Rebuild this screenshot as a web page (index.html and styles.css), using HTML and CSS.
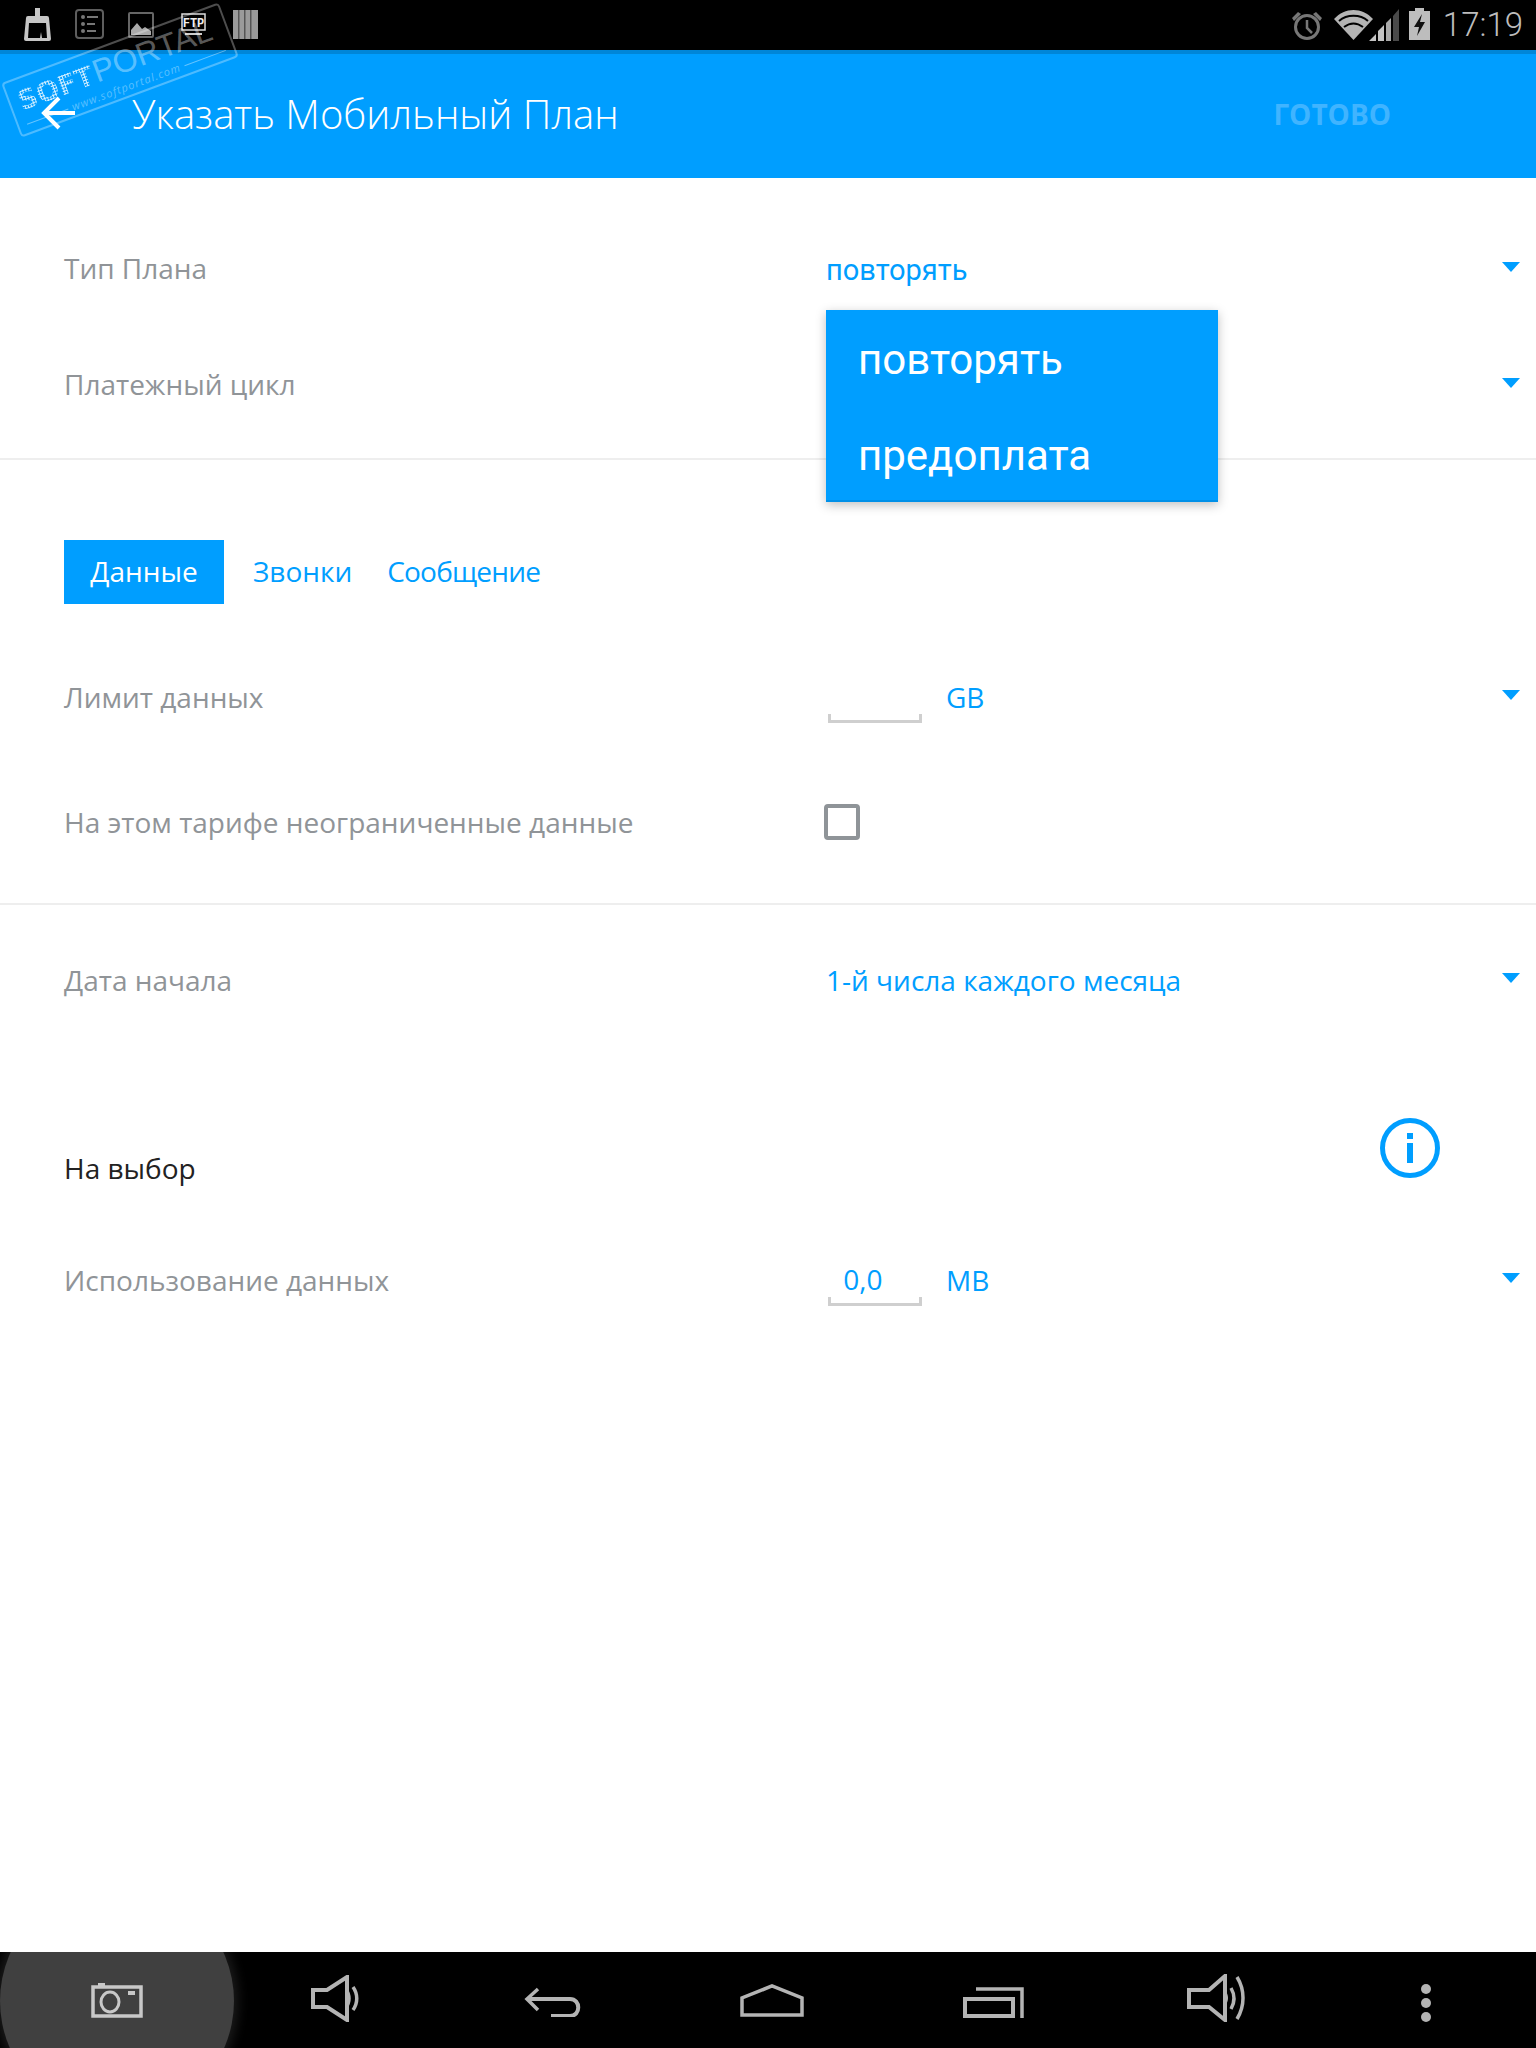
FILE: index.html
```html
<!DOCTYPE html>
<html lang="ru">
<head>
  <meta charset="UTF-8">
  <title>Указать Мобильный План</title>
  <link rel="stylesheet" href="styles.css">
</head>
<body>
  <div class="screen">
    <div class="status-bar">
      <div class="status-left">
        <svg class="ic-brush" viewBox="0 0 27 33"><path d="M11 0h5v8h7a2 2 0 0 1 2 2l2 21a2 2 0 0 1-2 2H2a2 2 0 0 1-2-2L2 10a2 2 0 0 1 2-2h7z" fill="#c6c6c6"/><path d="M5 15h17l1 15H18l-1-6-1 6H4z" fill="#000"/></svg>
        <svg class="ic-list" viewBox="0 0 29 30"><rect x="1" y="1" width="27" height="28" rx="3" fill="none" stroke="#5e5e5e" stroke-width="2"/><g fill="#777"><circle cx="8" cy="8" r="2"/><circle cx="8" cy="15" r="2"/><circle cx="8" cy="22" r="2"/><rect x="12" y="7" width="11" height="2"/><rect x="12" y="14" width="8" height="2"/><rect x="12" y="21" width="9" height="2"/></g></svg>
        <svg class="ic-pic" viewBox="0 0 26 26"><rect x="1" y="1" width="24" height="24" rx="1" fill="none" stroke="#666" stroke-width="2"/><path d="M3 23v-5l6-7 5 6 3-2 6 4v4z" fill="#aaa"/></svg>
        <svg class="ic-ftp" viewBox="0 0 25 23"><rect x="1" y="1" width="23" height="16" fill="none" stroke="#ddd" stroke-width="1.5"/><text x="12.5" y="14" text-anchor="middle" class="ftp-text">FTP</text><rect x="4" y="20" width="17" height="2" fill="#ccc"/></svg>
        <svg class="ic-bars" viewBox="0 0 25 29"><rect width="25" height="29" fill="#9a9a9a"/><g fill="#555"><rect x="5" width="1.5" height="29"/><rect x="11" width="1.5" height="29"/><rect x="17" width="1.5" height="29"/></g></svg>
      </div>
      <div class="status-right">
        <svg class="ic-alarm" viewBox="0 0 32 31"><circle cx="16" cy="17" r="11.5" fill="none" stroke="#777" stroke-width="3"/><path d="M16 10v8l5 5" fill="none" stroke="#777" stroke-width="2.5"/><path d="M1 8l6-6 3 2-7 7zM31 8l-6-6-3 2 7 7z" fill="#777"/></svg>
        <svg class="ic-wifi" viewBox="0 0 39 30"><path d="M19.500 30 0 9C11-3 28-3 39 9z" fill="#b4b4b4"/><path d="M5 11c8-7 21-7 29 0M10 17c6-4.500 13-4.500 19 0" fill="none" stroke="#000" stroke-width="2"/></svg>
        <svg class="ic-signal" viewBox="0 0 30 32"><path d="M0 32 7 25v7zM9 22l6-6v16H9z" fill="#c4c4c4"/><path d="M17 14l5-5v23h-5z" fill="#aaa"/><path d="M24 7l6-7v32h-6z" fill="#4a4a4a"/></svg>
        <svg class="ic-battery" viewBox="0 0 21 32"><path d="M6 0h9v3h6v29H0V3h6z" fill="#bdbdbd"/><path d="M13 6 5 19h5l-2 9 8-14h-5z" fill="#111"/></svg>
        <span class="clock">17:19</span>
      </div>
    </div>

    <header class="app-bar">
      <svg class="ic-back" viewBox="0 0 36 34"><path d="M34 17H4M18 2 3 17l15 15" fill="none" stroke="#fff" stroke-width="4"/></svg>
      <h1 class="app-title">Указать Мобильный План</h1>
      <span class="done">ГОТОВО</span>
    </header>

    <div class="watermark">
      <div class="wm-top"><span class="wm-soft">SOFT</span><span class="wm-portal">PORTAL</span></div>
      <div class="wm-url"><i></i><span>www.softportal.com</span><i></i></div>
    </div>

    <main class="form">
      <section class="plan">
        <div class="row">
          <span class="label">Тип Плана</span>
          <div class="value"><span>повторять</span><i class="arrow"></i></div>
        </div>
        <div class="row">
          <span class="label">Платежный цикл</span>
          <div class="value"><span></span><i class="arrow"></i></div>
        </div>
      </section>

      <section class="usage">
        <div class="tabs">
          <span class="tab active">Данные</span>
          <span class="tab">Звонки</span>
          <span class="tab tab-msg">Сообщение</span>
        </div>
        <div class="row row-limit">
          <span class="label">Лимит данных</span>
          <div class="value">
            <div class="unit-group">
              <div class="field"><span class="field-text"></span><div class="field-line"></div></div>
              <span class="unit">GB</span>
            </div>
            <i class="arrow"></i>
          </div>
        </div>
        <div class="row row-check">
          <span class="label">На этом тарифе неограниченные данные</span>
          <div class="value"><div class="checkbox"></div></div>
        </div>
      </section>

      <section class="extra">
        <div class="row row-date">
          <span class="label">Дата начала</span>
          <div class="value"><span>1-й числа каждого месяца</span><i class="arrow"></i></div>
        </div>
        <div class="optional">
          <span class="optional-title">На выбор</span>
          <svg class="ic-info" viewBox="0 0 60 60"><circle cx="30" cy="30" r="27.500" fill="none" stroke="#009eff" stroke-width="5"/><rect x="27" y="15" width="6" height="6" fill="#009eff"/><rect x="27" y="25" width="6" height="20" fill="#009eff"/></svg>
        </div>
        <div class="row row-used">
          <span class="label">Использование данных</span>
          <div class="value">
            <div class="unit-group">
              <div class="field"><span class="field-text">0,0</span><div class="field-line"></div></div>
              <span class="unit">MB</span>
            </div>
            <i class="arrow"></i>
          </div>
        </div>
      </section>
    </main>

    <div class="dropdown">
      <div class="dropdown-item">повторять</div>
      <div class="dropdown-item">предоплата</div>
    </div>

    <nav class="nav-bar">
      <div class="nav-glow"></div>
      <svg class="nav-cam" viewBox="0 0 52 36"><path d="M2 5h48v29H2z" fill="none" stroke="#c8c8c8" stroke-width="3.500"/><ellipse cx="19" cy="20" rx="9" ry="10" fill="none" stroke="#c8c8c8" stroke-width="3"/><rect x="37" y="9" width="7" height="4" fill="#c8c8c8"/><rect x="7" y="1" width="7" height="4" fill="#c8c8c8"/></svg>
      <svg class="nav-vol" viewBox="0 0 50 47"><path d="M2 15h14L36 2v43L16 32H2z" fill="none" stroke="#b4b4b4" stroke-width="4"/><path d="M36 13c5 6 5 15 0 21z" fill="#b4b4b4"/><path d="M42 12c5 7 5 16 0 23" fill="none" stroke="#b4b4b4" stroke-width="3.500"/></svg>
      <svg class="nav-back" viewBox="0 0 58 30"><path d="M14 2 3 12l11 11" fill="none" stroke="#b4b4b4" stroke-width="3.500"/><path d="M3 12h43c11 0 11 17 0 17H27" fill="none" stroke="#b4b4b4" stroke-width="4"/></svg>
      <svg class="nav-home" viewBox="0 0 64 33"><path d="M2 31V14L32 2l30 12v17z" fill="none" stroke="#b4b4b4" stroke-width="3.500"/></svg>
      <svg class="nav-recent" viewBox="0 0 61 31"><rect x="2" y="12" width="48" height="17" fill="none" stroke="#b4b4b4" stroke-width="4"/><path d="M13 2h46v29" fill="none" stroke="#b4b4b4" stroke-width="3.500"/></svg>
      <svg class="nav-vol2" viewBox="0 0 60 48"><path d="M2 16h20L38 2v44L22 33H2z" fill="none" stroke="#b4b4b4" stroke-width="4"/><path d="M38 16c4 5 4 11 0 16z" fill="#b4b4b4"/><path d="M44 14c4 7 4 14 0 21M50 3c8 13 8 29 0 42" fill="none" stroke="#b4b4b4" stroke-width="3.500"/></svg>
      <svg class="nav-dots" viewBox="0 0 10 38"><ellipse cx="5" cy="5" rx="5" ry="5" fill="#b4b4b4"/><ellipse cx="5" cy="19" rx="5" ry="5" fill="#b4b4b4"/><ellipse cx="5" cy="33" rx="5" ry="5" fill="#b4b4b4"/></svg>
    </nav>
  </div>
</body>
</html>
```

FILE: styles.css
```css
* {
  box-sizing: border-box;
}
html, body {
  margin: 0;
  padding: 0;
}
body {
  background: #fff;
  font-family: "Open Sans", "Noto Sans", sans-serif;
}
.screen {
  position: relative;
  width: 1536px;
  height: 2048px;
  overflow: hidden;
  display: flex;
  flex-direction: column;
}

/* status bar */
.status-bar {
  height: 50px;
  background: #000;
  display: flex;
  justify-content: space-between;
  flex-shrink: 0;
}
.status-bar svg {
  display: block;
  flex-shrink: 0;
}
.status-left, .status-right {
  display: flex;
  position: relative;
}
.status-left {
  padding-left: 24px;
}
.ic-brush { width: 27px; height: 33px; margin-top: 8px; }
.ic-list { width: 29px; height: 30px; margin: 9px 0 0 24px; }
.ic-pic { width: 26px; height: 26px; margin: 12px 0 0 24px; }
.ic-ftp { width: 25px; height: 23px; margin: 13px 0 0 27px; }
.ic-bars { width: 25px; height: 29px; margin: 10px 0 0 27px; }
.ftp-text {
  font-family: "Liberation Mono", monospace;
  font-size: 12px;
  font-weight: 700;
  fill: #eee;
}
.status-right {
  padding-right: 13px;
}
.ic-alarm { width: 32px; height: 31px; margin: 10px 0 0 1px; }
.ic-wifi { width: 39px; height: 30px; margin: 10px 0 0 11px; }
.ic-signal { width: 30px; height: 32px; margin: 9px 0 0 -4px; }
.ic-battery { width: 21px; height: 32px; margin: 8px 0 0 10px; }
.clock {
  font-family: Roboto, sans-serif;
  font-weight: 300;
  font-size: 33px;
  line-height: 50px;
  color: #bdbdbd;
  margin-left: 13px;
}

/* app bar */
.app-bar {
  height: 128px;
  flex-shrink: 0;
  background: #009eff;
  border-top: 4px solid #0086d8;
  display: flex;
  align-items: center;
  padding: 0 0 0 41px;
}
.ic-back {
  width: 36px;
  height: 34px;
  margin-top: -6px;
  flex-shrink: 0;
}
.app-title {
  margin: -6px 0 0 55px;
  font-size: 40px;
  font-weight: 300;
  color: #fff;
  white-space: nowrap;
}
.done {
  margin: -4px 145px 0 auto;
  font-size: 28px;
  font-weight: 700;
  color: #40b4ff;
}

/* watermark stamp, lies over the bars */
.watermark {
  position: absolute;
  left: 4px;
  top: 41px;
  width: 232px;
  height: 58px;
  border: 2px solid rgba(255, 255, 255, .3);
  border-radius: 4px;
  transform: rotate(-20.4deg);
  color: rgba(255, 255, 255, .36);
  padding: 0 8px;
  z-index: 3;
}
.wm-top {
  display: flex;
  align-items: baseline;
  height: 38px;
  line-height: 40px;
}
.wm-soft {
  font-family: "DejaVu Sans", sans-serif;
  font-size: 27px;
  font-weight: 700;
  color: transparent;
  background: radial-gradient(circle, rgba(255, 255, 255, .85) 50%, transparent 55%) 0 0 / 3px 3px;
  -webkit-background-clip: text;
  background-clip: text;
}
.wm-portal {
  font-family: "Liberation Sans", sans-serif;
  font-size: 32px;
  margin-left: 1px;
}
.wm-url {
  display: flex;
  align-items: center;
  gap: 4px;
  font-size: 11px;
  line-height: 14px;
  font-style: italic;
  letter-spacing: 1px;
}
.wm-url i {
  flex: 1;
  height: 1px;
  background: rgba(255, 255, 255, .4);
}

/* form */
.form {
  flex: 1;
  font-family: Roboto, sans-serif;
}
.plan {
  padding: 33px 0 15px;
  border-bottom: 2px solid #eee;
}
.row {
  display: grid;
  grid-template-columns: 762px 1fr;
  align-items: center;
  height: 116px;
  padding: 0 16px 0 64px;
}
.label {
  font-family: "Open Sans", sans-serif;
  font-size: 28px;
  padding-bottom: 2px;
  color: #909498;
}
.value {
  display: flex;
  justify-content: space-between;
  align-items: center;
  font-family: "Open Sans", sans-serif;
  font-size: 28px;
  color: #009eff;
}
.plan .value {
  font-family: Roboto, sans-serif;
  font-size: 29px;
  padding-top: 2px;
}
.row-date .value span {
  padding-bottom: 2px;
}
.arrow {
  width: 0;
  height: 0;
  border-left: 9px solid transparent;
  border-right: 9px solid transparent;
  border-top: 10px solid #009eff;
  margin-bottom: 6px;
}

.tabs {
  display: flex;
  margin: 80px 0 44px 64px;
  height: 64px;
  font-family: "Open Sans", sans-serif;
  font-size: 28px;
  color: #009eff;
}
.tab {
  line-height: 63px;
  margin-right: 35px;
}
.tab.active {
  background: #009eff;
  color: #fff;
  width: 160px;
  text-align: center;
  margin-right: 29px;
}
.tab-msg {
  letter-spacing: -.8px;
}
.row-limit, .row-check {
  height: 100px;
}
.row-check {
  margin-top: 24px;
}
.row-check .label {
  padding-bottom: 0;
}
.usage {
  padding-bottom: 31px;
  border-bottom: 2px solid #eee;
}
.unit-group {
  display: flex;
  align-items: center;
  gap: 24px;
  padding-left: 2px;
}
.unit {
  padding-bottom: 2px;
}
.field {
  width: 94px;
  margin-top: 3px;
  text-align: center;
}
.field-text {
  display: block;
  height: 38px;
  line-height: 40px;
  padding-right: 24px;
}
.field-line {
  height: 9px;
  border: 3px solid #cfcfcf;
  border-top: none;
}
.checkbox {
  width: 36px;
  height: 36px;
  margin-left: -2px;
  border: 4px solid #8f9498;
  border-radius: 4px;
}

.row-date {
  height: 100px;
  margin-top: 26px;
}
.optional {
  display: flex;
  justify-content: space-between;
  align-items: center;
  height: 80px;
  margin-top: 98px;
  padding: 0 96px 0 64px;
}
.optional-title {
  font-family: "Open Sans", sans-serif;
  font-size: 28px;
  padding-bottom: 2px;
  color: #222;
}
.ic-info {
  width: 60px;
  height: 60px;
  margin-top: -42px;
}
.row-used {
  height: 100px;
  margin-top: 22px;
}

/* open dropdown */
.dropdown {
  position: absolute;
  left: 826px;
  top: 310px;
  width: 392px;
  height: 192px;
  background: #009eff;
  border-bottom: 2px solid #0090e8;
  box-shadow: 0 3px 10px rgba(0, 0, 0, .25);
  font-family: Roboto, sans-serif;
  font-size: 42px;
  color: #fff;
  z-index: 2;
}
.dropdown-item {
  height: 95px;
  line-height: 100px;
  padding-left: 32px;
}
.dropdown-item + .dropdown-item {
  line-height: 102px;
}

/* nav bar */
.nav-bar {
  position: relative;
  height: 96px;
  flex-shrink: 0;
  background: #000;
  overflow: hidden;
}
.nav-bar svg {
  position: absolute;
}
.nav-glow {
  position: absolute;
  left: 0;
  top: -68px;
  width: 234px;
  height: 234px;
  border-radius: 50%;
  background: #404040;
  box-shadow: 0 0 12px 4px #1c1c1c;
}
.nav-cam { left: 91px; top: 30px; width: 52px; height: 36px; }
.nav-vol { left: 311px; top: 23px; width: 50px; height: 47px; }
.nav-back { left: 524px; top: 35px; width: 58px; height: 30px; }
.nav-home { left: 740px; top: 32px; width: 64px; height: 33px; }
.nav-recent { left: 963px; top: 35px; width: 61px; height: 31px; }
.nav-vol2 { left: 1187px; top: 22px; width: 60px; height: 48px; }
.nav-dots { left: 1421px; top: 32px; width: 10px; height: 38px; }
```
